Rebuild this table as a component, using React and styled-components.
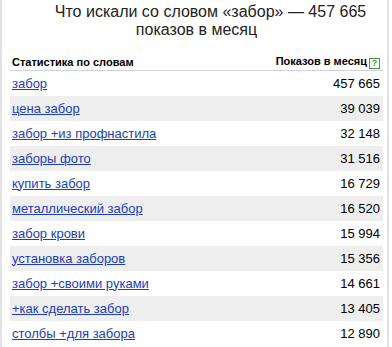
import styled, { createGlobalStyle } from "styled-components"

const GlobalStyle = createGlobalStyle`
  html, body {
    margin: 0;
    padding: 0;
    background: #fff;
  }
  body {
    font-family: "Liberation Sans", Arial, sans-serif;
  }
`

const phrases = [
  ["забор", "457 665"],
  ["цена забор", "39 039"],
  ["забор +из профнастила", "32 148"],
  ["заборы фото", "31 516"],
  ["купить забор", "16 729"],
  ["металлический забор", "16 520"],
  ["забор крови", "15 994"],
  ["установка заборов", "15 356"],
  ["забор +своими руками", "14 661"],
  ["+как сделать забор", "13 405"],
  ["столбы +для забора", "12 890"],
]

const App = () => {
  return (
    <>
      <GlobalStyle />
      <Panel>
        <Title>Что искали со словом «забор» — 457 665 показов в месяц</Title>
        <Stats>
          <thead>
            <tr>
              <HeadCell>Статистика по словам</HeadCell>
              <HeadCell $right>
                Показов в месяц
                <Help title="Справка">?</Help>
              </HeadCell>
            </tr>
          </thead>
          <tbody>
            {phrases.map(([word, count], i) => (
              <Row key={word} $odd={i % 2 === 1}>
                <Cell>
                  <WordLink href="#">{word}</WordLink>
                </Cell>
                <Cell $right>{count}</Cell>
              </Row>
            ))}
          </tbody>
        </Stats>
      </Panel>
    </>
  )
}
export default App

const Panel = styled.div`
  width: 373px;
  padding: 3px 4px 0 8px;
  border-left: 2px solid #e2e2e2;
  border-right: 2px solid #e2e2e2;
  min-height: 344px;
`

const Title = styled.h2`
  margin: 0 0 16px;
  padding: 0 4px;
  font-size: 16px;
  font-weight: normal;
  line-height: 18px;
  color: #222;
  text-align: center;
  text-indent: 28px;
`

const Stats = styled.table`
  width: 100%;
  border-collapse: collapse;
  border-spacing: 0;
`

const HeadCell = styled.th`
  padding: 0 3px 1px 2px;
  font-size: 11px;
  line-height: 13px;
  font-weight: bold;
  color: #000;
  text-align: ${(p) => (p.$right ? "right" : "left")};
  border-bottom: 1px solid #d3d0dc;
  white-space: nowrap;
`

const Help = styled.span`
  display: inline-block;
  box-sizing: border-box;
  width: 11px;
  height: 11px;
  margin-left: 2px;
  border: 1px solid #3d9a3d;
  color: #3d9a3d;
  font-size: 9px;
  line-height: 9px;
  font-weight: bold;
  text-align: center;
  vertical-align: -1px;
`

const Row = styled.tr`
  height: 25px;
  background: ${(p) => (p.$odd ? "#eeeeee" : "#fff")};
`

const Cell = styled.td`
  padding: 0 3px 0 2px;
  font-size: 13px;
  color: #000;
  text-align: ${(p) => (p.$right ? "right" : "left")};
`

const WordLink = styled.a`
  color: #1a3dc1;
  text-decoration: underline;
`
